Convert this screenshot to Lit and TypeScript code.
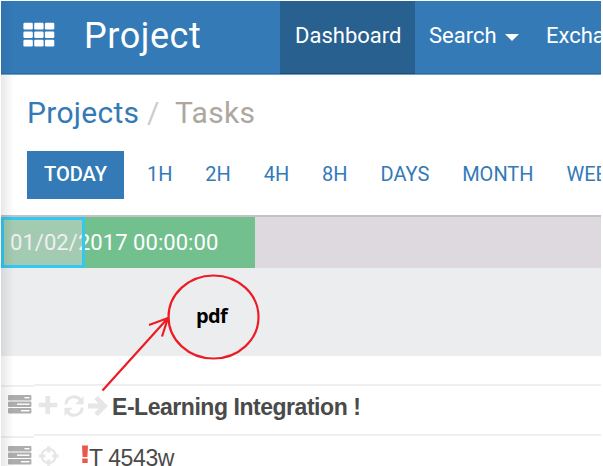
import { LitElement, html, css, svg } from "lit";
import { customElement } from "lit/decorators.js";

const SCALES = ["1H", "2H", "4H", "8H", "DAYS", "MONTH", "WEEK"];

const serverIcon = html`<svg class="server" width="24" height="19" viewBox="0 0 24 19">
  ${[0, 6.5, 13].map(
    (y, i) => svg`<rect x="0" y=${y} width="23.4" height="5.400" rx="1" fill="#adadad"/>
    <rect x=${i === 1 ? 9 : i === 2 ? 13 : 16.5} y=${y + 2} width=${i === 1 ? 12.5 : i === 2 ? 8.5 : 5} height="1.4" fill="#fff"/>`
  )}
</svg>`;

@customElement("app-root")
export class AppRoot extends LitElement {
  static styles = css`
    :host {
      display: block;
      position: relative;
      box-sizing: border-box;
      width: 603px;
      height: 466px;
      padding: 1px 2px 0 1px;
      overflow: hidden;
      background: #fff;
      font-family: Roboto, sans-serif;
      white-space: nowrap;
    }
    .page { height: 465px; overflow: hidden; position: relative; }
    .nav {
      display: flex;
      height: 73px;
      background: #337ab7;
      border-bottom: 1px solid #6d9fca;
      box-shadow: inset 0 -1px #2e6da4;
      color: #fff;
      font-size: 22px;
      line-height: 69px;
      overflow: hidden;
    }
    .grid { margin: 21px 0 0 22px; flex: none; width: 32px; }
    .brand { font-size: 36px; line-height: 71px; margin-left: 29px; width: 196px; flex: none; letter-spacing: 0.55px; }
    .active { flex: none; width: 120px; padding-left: 15px; background: #286090; box-shadow: inset 0 -1px #204d74; }
    .search { flex: none; display: flex; width: 103px; padding-left: 14px; }
    .caret { margin: 33px 0 0 8px; border: 7px solid transparent; border-top-color: #fff; border-bottom: 0; height: 0; }
    .exchange { flex: none; padding-left: 14px; }
    .crumbs { display: flex; height: 76px; font-size: 30px; line-height: 76px; color: #aea79f; letter-spacing: 0.3px; }
    .crumbs .link { color: #337ab7; margin-left: 26px; width: 120px; }
    .crumbs .sep { color: #ccc; width: 28px; }
    .scales { display: flex; height: 64px; font-size: 20px; line-height: 46px; color: #337ab7; }
    .today { width: 97px; height: 48px; margin: 0 6.5px 0 26px; background: #337ab7; color: #fff; text-align: center; font-weight: 500; flex: none; }
    .scale { flex: none; padding: 0 16.45px; }
    .timeline { display: flex; height: 51px; border-top: 2px solid #c3c3c3; background: #ddd9de; position: relative; }
    .stamp { width: 244.5px; padding-left: 9px; background: #73c08f; color: #fff; font-size: 22px; line-height: 51px; letter-spacing: 0.05px; }
    .window {
      position: absolute;
      left: 0;
      top: 0;
      width: 84px;
      height: 51px;
      box-sizing: border-box;
      border: 3px solid #33c8f4;
      background: rgba(221, 217, 222, 0.45);
    }
    .band { height: 88px; background: #ecedef; }
    .rows { display: flex; height: 109px; font-family: "Liberation Sans", Arial, sans-serif; font-size: 23px; color: #4a4a4a; }
    .handles { width: 33px; padding-top: 29px; flex: none; }
    .body { flex: 1; padding-top: 28px; }
    .handle, .row { box-sizing: border-box; border-top: 2px solid #eeeff1; }
    .handle { height: 51px; padding: 8px 0 0 7px; }
    .row { display: flex; height: 50px; line-height: 42px; }
    .server { display: block; }
    .tools { flex: none; width: 78px; margin-top: 9px; height: 24px; }
    .title { font-weight: bold; font-size: 23px; letter-spacing: -0.46px; }
    .task { letter-spacing: -0.4px; line-height: 44px; }
    .bang { flex: none; width: 8px; margin: 9px 0 0 -31px; }
    .shade { position: absolute; left: 0; top: 74px; bottom: 0; width: 13px; background: linear-gradient(90deg, rgba(0, 0, 0, 0.09), transparent); }
    .navshade { position: absolute; left: 0; top: 0; height: 73px; width: 13px; background: linear-gradient(90deg, rgba(0, 0, 0, 0.05), transparent); }
    .marks { position: absolute; left: 95px; top: 265px; }
    .pdf { position: absolute; left: 196px; top: 303px; font: bold 20px/26px "Open Sans", sans-serif; letter-spacing: -0.6px; color: #000; }
  `;

  render() {
    return html`
      <div class="page">
        <nav class="nav">
          <svg class="grid" width="32" height="26" viewBox="0 0 32 26" fill="#fff">
            ${[0, 8.6, 17].map((y) => [0.4, 11.2, 21.9].map((x) => svg`<rect x=${x} y=${y + 0.8} width="9.400" height="6.700" rx="1.300"/>`))}
          </svg>
          <span class="brand">Project</span>
          <span class="active">Dashboard</span>
          <span class="search">Search<i class="caret"></i></span>
          <span class="exchange">Exchange</span>
        </nav>
        <div class="crumbs"><span class="link">Projects</span><span class="sep">/</span><span>Tasks</span></div>
        <div class="scales">
          <span class="today">TODAY</span>
          ${SCALES.map((s) => html`<span class="scale">${s}</span>`)}
        </div>
        <div class="timeline"><div class="stamp">01/02/2017 00:00:00</div><div class="window"></div></div>
        <div class="band"></div>
        <div class="rows">
          <div class="handles">
            <div class="handle">${serverIcon}</div>
            <div class="handle">${serverIcon}</div>
          </div>
          <div class="body">
            <div class="row">
              <svg class="tools" width="78" height="24" viewBox="0 0 78 24" fill="none" stroke="#e6e6e6" stroke-width="4.600">
                <path d="M13.800 1v18M4.800 10h18.500"/>
                <path d="M31.800 9.500a8.200 8.200 0 0 1 14.700-4.500M48.200 12.500a8.200 8.200 0 0 1-14.700 4.500" stroke-width="3"/>
                <path d="M49.500 1v8.300h-8.300zM30.500 21v-8.300h8.300z" fill="#e6e6e6" stroke="none"/>
                <path d="M54 11h15M62 2.500l8.500 8.500-8.500 8.500" stroke-width="4.800"/>
              </svg>
              <span class="title">E-Learning Integration !</span>
            </div>
            <div class="row">
              <svg class="tools" width="78" height="24" viewBox="0 0 78 24" fill="none" stroke="#e6e6e6">
                <circle cx="14.700" cy="11" r="7" stroke-width="2.200"/>
                <path d="M14.700 1.200v6.300M14.700 14.500v6.300M4.800 11h6.400M18.200 11h6.400" stroke-width="3.200"/>
              </svg>
              <svg class="bang" width="8" height="20" viewBox="0 0 8 20" fill="#e8594c">
                <path d="M1 .5h6l-.600 11.500H1.600zM1.300 13.500h5.400v4.500h-5.400z"/>
              </svg>
              <span class="task">T 4543w</span>
            </div>
          </div>
        </div>
        <div class="navshade"></div>
        <div class="shade"></div>
      </div>
      <svg class="marks" width="170" height="130" viewBox="95 265 170 130" fill="none" stroke="#ed1c24" stroke-width="2.200">
        <ellipse cx="213.500" cy="317" rx="45" ry="41.500"/>
        <path d="M102.500 390.500L168 318M149 325l19-7-6 18.500"/>
      </svg>
      <div class="pdf">pdf</div>
    `;
  }
}
